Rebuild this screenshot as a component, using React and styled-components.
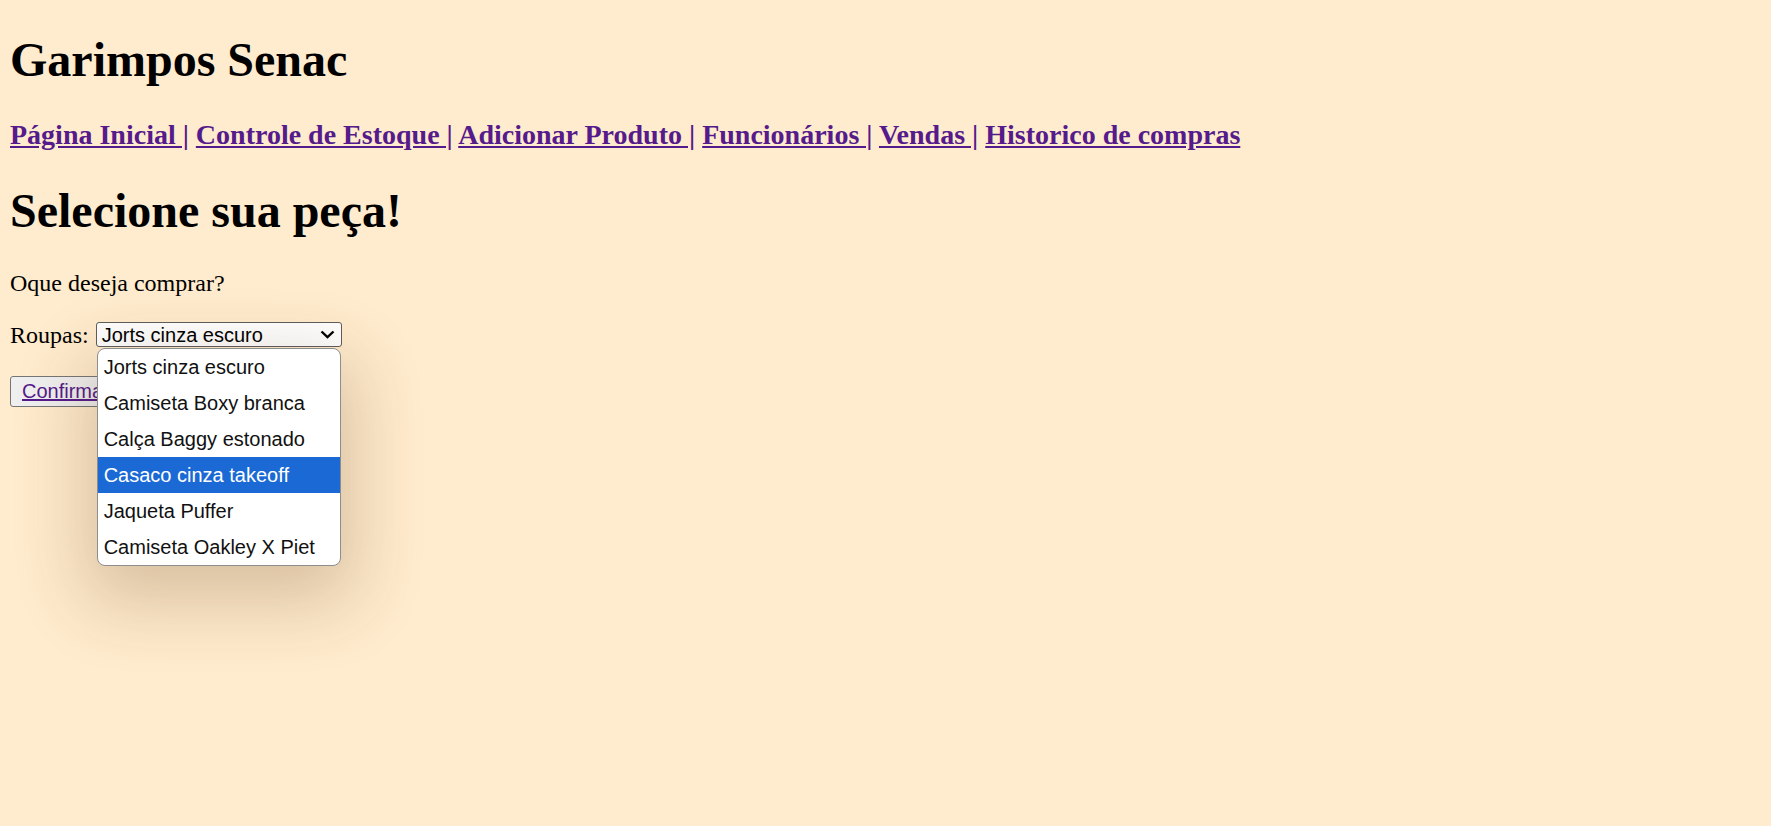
import React from 'react'
import styled, { createGlobalStyle } from 'styled-components'

const GlobalStyle = createGlobalStyle`
    html, body {
        margin: 0;
        min-height: 100%;
        background-color: #ffebcd;
    }

    body {
        font-family: 'Liberation Serif', 'Times New Roman', serif;
        color: #000;
    }
`

const Page = styled.div`
    box-sizing: border-box;
    min-height: 100vh;
    padding: 1px 10px 0;
    margin-top: -1px;
`

const Title = styled.h1`
    margin: 32px 0;
    font-size: 48px;
    line-height: 55px;
    font-weight: bold;
`

const Nav = styled.h3`
    margin: 28px 0;
    font-size: 28px;
    line-height: 32px;
    font-weight: bold;
`

const NavLink = styled.a`
    color: #551a8b;
    text-decoration: underline;
`

const Prompt = styled.p`
    margin: 24px 0;
    font-size: 24px;
    line-height: 27px;
`

const FieldRow = styled.div`
    display: flex;
    align-items: center;
    height: 25px;
    margin-top: 25px;
    font-size: 24px;
    line-height: 24px;
`

const Label = styled.label`
    margin-right: 7px;
`

const SelectWrap = styled.div`
    position: relative;
`

const SelectBox = styled.div`
    box-sizing: border-box;
    display: flex;
    align-items: center;
    justify-content: space-between;
    width: 246px;
    height: 25px;
    padding: 0 6px 0 5px;
    border: 1px solid #5e5e5e;
    border-radius: 3px;
    background: #fff;
    font-family: 'Liberation Sans', Arial, sans-serif;
    font-size: 20px;
    line-height: 22px;
    color: #000;
`

const Menu = styled.ul`
    position: absolute;
    top: 26px;
    left: 1px;
    box-sizing: border-box;
    width: 244px;
    margin: 0;
    padding: 0;
    list-style: none;
    background: #fff;
    border: 1px solid #8e8e8e;
    border-radius: 8px;
    overflow: hidden;
    box-shadow: 0 24px 70px 12px rgba(90, 60, 20, 0.24);
    z-index: 10;
`

const Option = styled.li`
    height: 36px;
    padding-left: 6px;
    font-family: 'Liberation Sans', Arial, sans-serif;
    font-size: 20px;
    line-height: 36px;
    color: ${(p) => (p.$active ? '#fff' : '#111')};
    background: ${(p) => (p.$active ? '#1b69d4' : 'transparent')};
`

const ButtonRow = styled.div`
    margin-top: 29px;
`

const Button = styled.button`
    box-sizing: border-box;
    height: 31px;
    padding: 0 11px;
    border: 1px solid #767676;
    border-radius: 3px;
    background: #efefef;
    font-family: 'Liberation Sans', Arial, sans-serif;
    font-size: 20px;
`

const ButtonLink = styled.a`
    color: #551a8b;
    text-decoration: underline;
`

const Chevron = () => (
    <svg width="15" height="9" viewBox="0 0 15 9" fill="none">
        <path d="M1.5 1.5 L7.5 7.2 L13.5 1.5" stroke="#000" strokeWidth="2.4" />
    </svg>
)

const links = [
    'Página Inicial |',
    'Controle de Estoque |',
    'Adicionar Produto |',
    'Funcionários |',
    'Vendas |',
    'Historico de compras',
]

const roupas = [
    'Jorts cinza escuro',
    'Camiseta Boxy branca',
    'Calça Baggy estonado',
    'Casaco cinza takeoff',
    'Jaqueta Puffer',
    'Camiseta Oakley X Piet',
]

export default function App() {
    return (
        <Page>
            <GlobalStyle />
            <Title>Garimpos Senac</Title>
            <Nav>
                {links.map((l, i) => (
                    <React.Fragment key={l}>
                        <NavLink href="#">{l}</NavLink>
                        {i < links.length - 1 ? ' ' : ''}
                    </React.Fragment>
                ))}
            </Nav>
            <Title>Selecione sua peça!</Title>
            <Prompt>Oque deseja comprar?</Prompt>
            <FieldRow>
                <Label>Roupas:</Label>
                <SelectWrap>
                    <SelectBox>
                        <span>Jorts cinza escuro</span>
                        <Chevron />
                    </SelectBox>
                    <Menu>
                        {roupas.map((r) => (
                            <Option key={r} $active={r === 'Casaco cinza takeoff'}>
                                {r}
                            </Option>
                        ))}
                    </Menu>
                </SelectWrap>
            </FieldRow>
            <ButtonRow>
                <Button>
                    <ButtonLink href="#">Confirmar</ButtonLink>
                </Button>
            </ButtonRow>
        </Page>
    )
}
